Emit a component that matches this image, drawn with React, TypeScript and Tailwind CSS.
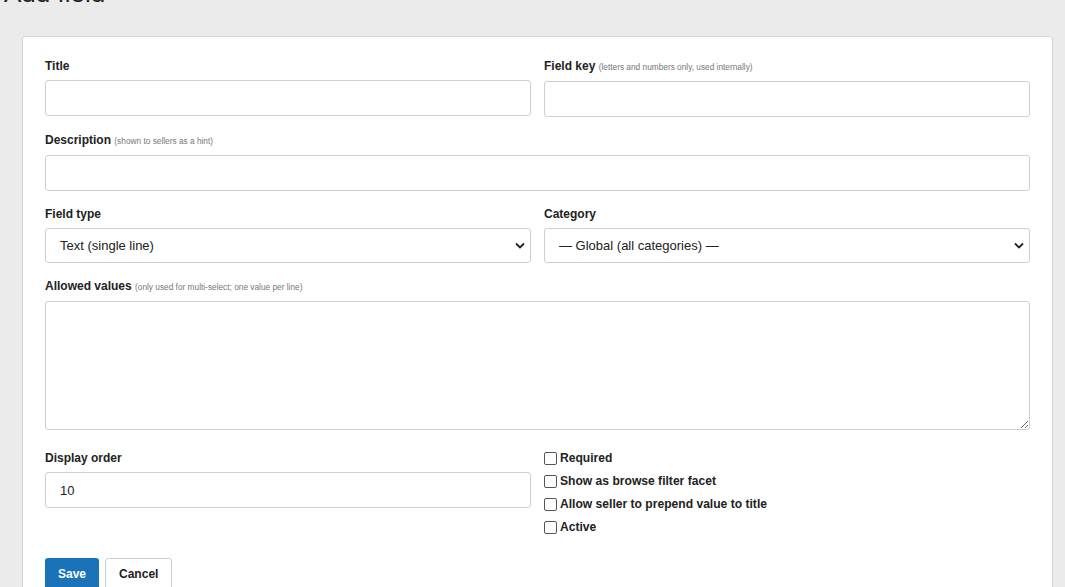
export default function App() {
  const input = "block w-full h-[36px] border border-[#cfcfcf] rounded-[3px] bg-white px-[14px] text-[13px] text-[#222]";
  const label = "block text-[12px] font-bold text-[#222] mb-[6px] leading-[15px]";
  const hint = "text-[8.3px] font-normal text-[#777]";
  const sel = "w-full h-[35px] border border-[#cfcfcf] rounded-[3px] bg-white pl-[14px] pr-[5px] text-[13px] text-[#222] flex items-center justify-between";
  const chev = (
    <svg width="10" height="7" viewBox="0 0 10 7"><path d="M1 1.5l4 4 4-4" fill="none" stroke="#222" strokeWidth="1.8" /></svg>
  );
  return (
    <div className="min-h-[587px] bg-[#ebebeb] overflow-hidden" style={{ fontFamily: '"Liberation Sans", Arial, sans-serif' }}>
      <h1 className="text-[26px] text-[#222] leading-[30px] mt-[-22px] ml-[4px]">Add field</h1>
      <div className="ml-[22px] mr-[12px] mt-[28px] bg-white border border-[#d6d6d6] rounded-[3px] px-[22px] pt-[22px] pb-[20px]">
        <div className="grid grid-cols-2 gap-x-[13px]">
          <div>
            <label className={label}>Title</label>
            <input className={input} />
          </div>
          <div>
            <label className={label}>Field key <span className={hint}>(letters and numbers only, used internally)</span></label>
            <input className={input} />
          </div>
        </div>
        <div className="mt-[16px]">
          <label className={label}>Description <span className={hint}>(shown to sellers as a hint)</span></label>
          <input className={input} />
        </div>
        <div className="grid grid-cols-2 gap-x-[13px] mt-[16px]">
          <div>
            <label className={label}>Field type</label>
            <div className={sel}><span>Text (single line)</span>{chev}</div>
          </div>
          <div>
            <label className={label}>Category</label>
            <div className={sel}><span>— Global (all categories) —</span>{chev}</div>
          </div>
        </div>
        <div className="mt-[16px]">
          <label className={label}>Allowed values <span className={hint}>(only used for multi-select; one value per line)</span></label>
          <textarea className="block w-full h-[129px] border border-[#cfcfcf] rounded-[3px] bg-white" />
        </div>
        <div className="grid grid-cols-2 gap-x-[13px] mt-[21px]">
          <div>
            <label className={label}>Display order</label>
            <input className={input} defaultValue="10" />
          </div>
          <div className="flex flex-col gap-[7px] mt-[-1px]">
            {["Required", "Show as browse filter facet", "Allow seller to prepend value to title", "Active"].map((t) => (
              <div key={t} className="flex items-center h-[16px] text-[12.1px] font-bold text-[#222]">
                <span className="w-[13px] h-[13px] border border-[#555] rounded-[2px] mr-[3px] bg-white" />
                {t}
              </div>
            ))}
          </div>
        </div>
        <div className="flex gap-[6px] mt-[23px]">
          <button className="h-[32px] px-[13px] bg-[#1a73b8] text-white text-[12px] font-bold rounded-[3px]">Save</button>
          <button className="h-[32px] px-[13px] bg-white border border-[#cfcfcf] text-[#222] text-[12px] font-bold rounded-[3px]">Cancel</button>
        </div>
      </div>
    </div>
  );
}
